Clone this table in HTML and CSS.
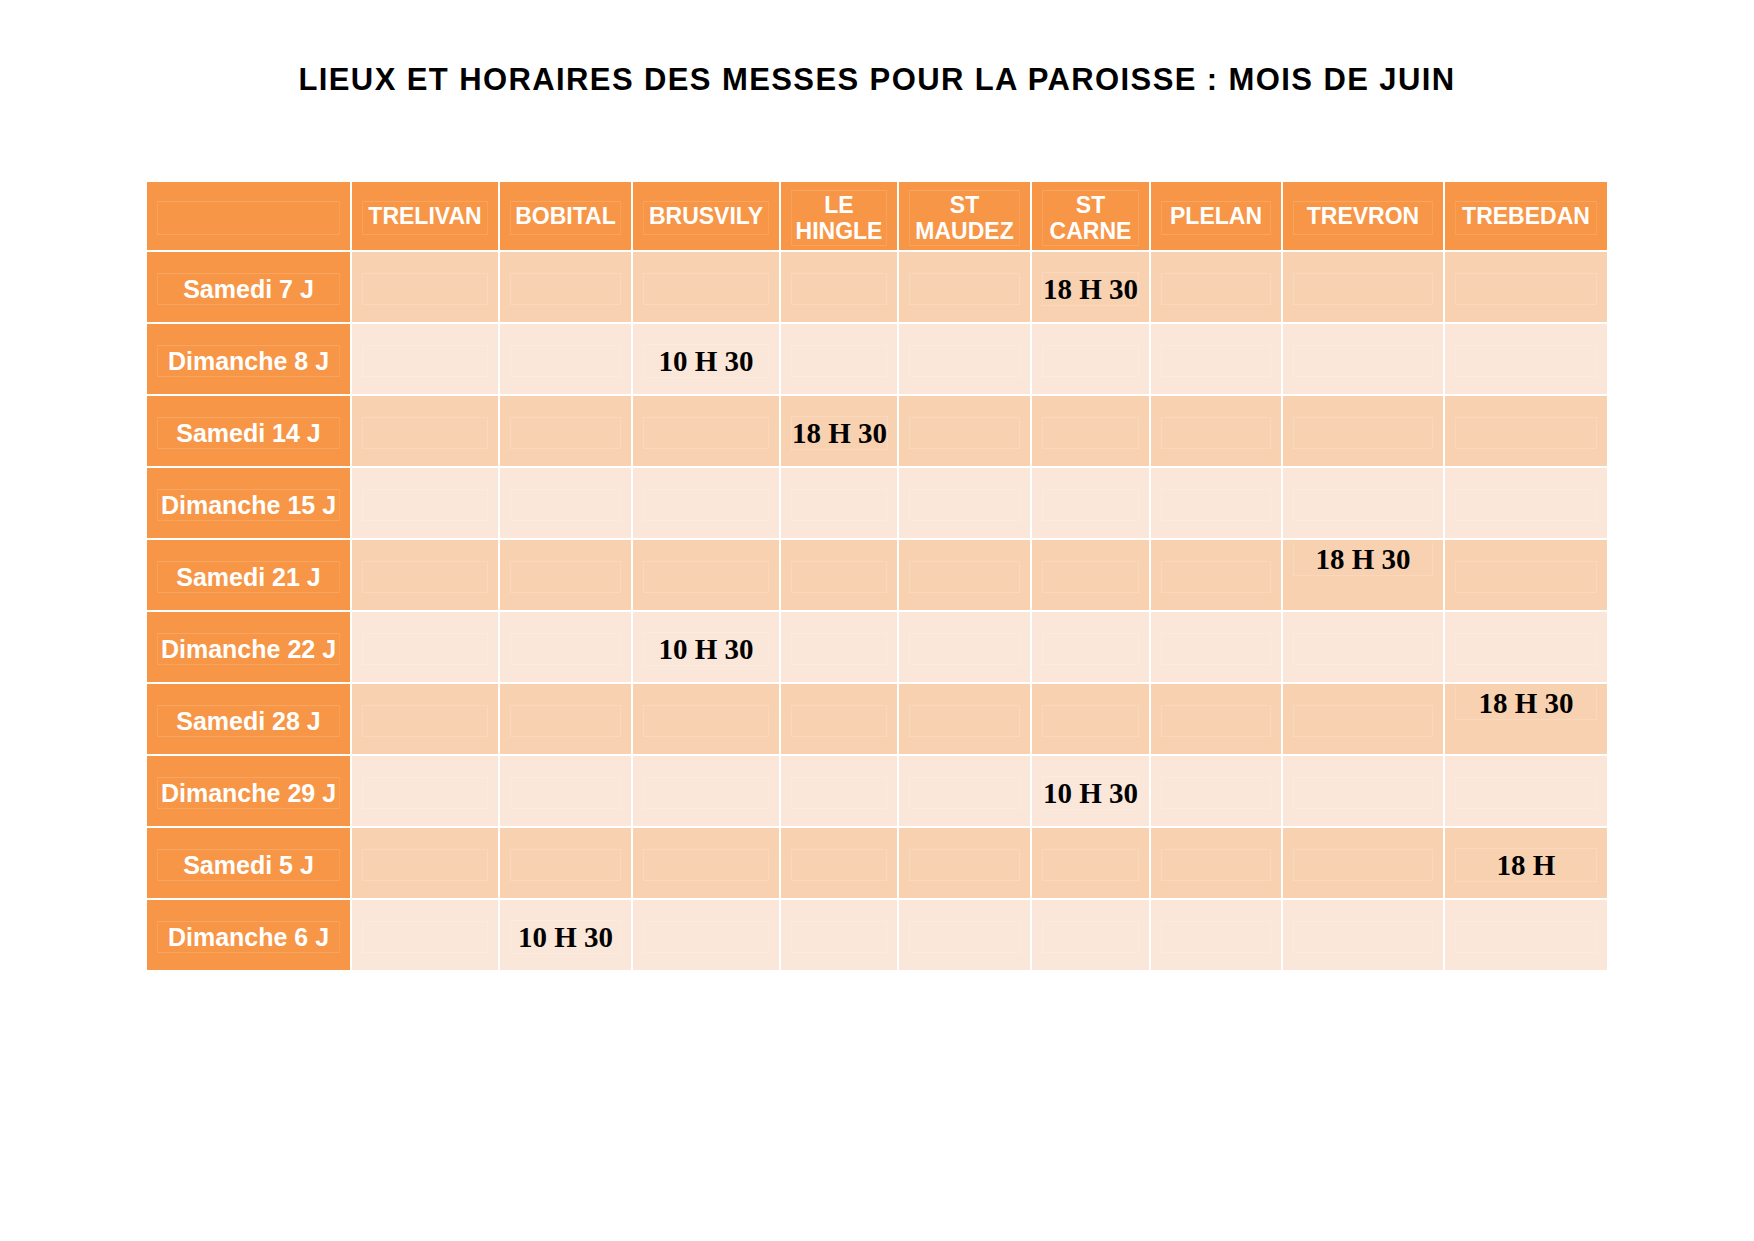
FILE: index.html
```html
<!DOCTYPE html>
<html lang="fr">
<head>
<meta charset="utf-8">
<title>Lieux et horaires des messes</title>
<link rel="stylesheet" href="styles.css">
</head>
<body>
<h1 class="title">LIEUX ET HORAIRES DES MESSES POUR LA PAROISSE : MOIS DE JUIN</h1>
<div class="schedule">
  <div class="cell head"><span class="frame wide">&nbsp;</span></div>
  <div class="cell head"><span class="frame">TRELIVAN</span></div>
  <div class="cell head"><span class="frame">BOBITAL</span></div>
  <div class="cell head"><span class="frame">BRUSVILY</span></div>
  <div class="cell head"><span class="frame">LE<br>HINGLE</span></div>
  <div class="cell head"><span class="frame">ST<br>MAUDEZ</span></div>
  <div class="cell head"><span class="frame">ST<br>CARNE</span></div>
  <div class="cell head"><span class="frame">PLELAN</span></div>
  <div class="cell head"><span class="frame">TREVRON</span></div>
  <div class="cell head"><span class="frame">TREBEDAN</span></div>

  <div class="cell label"><span class="frame">Samedi 7 J</span></div>
  <div class="cell odd"><span class="frame"></span></div>
  <div class="cell odd"><span class="frame"></span></div>
  <div class="cell odd"><span class="frame"></span></div>
  <div class="cell odd"><span class="frame"></span></div>
  <div class="cell odd"><span class="frame"></span></div>
  <div class="cell odd"><span class="frame time">18 H 30</span></div>
  <div class="cell odd"><span class="frame"></span></div>
  <div class="cell odd"><span class="frame"></span></div>
  <div class="cell odd"><span class="frame"></span></div>

  <div class="cell label"><span class="frame">Dimanche 8 J</span></div>
  <div class="cell even"><span class="frame"></span></div>
  <div class="cell even"><span class="frame"></span></div>
  <div class="cell even"><span class="frame time">10 H 30</span></div>
  <div class="cell even"><span class="frame"></span></div>
  <div class="cell even"><span class="frame"></span></div>
  <div class="cell even"><span class="frame"></span></div>
  <div class="cell even"><span class="frame"></span></div>
  <div class="cell even"><span class="frame"></span></div>
  <div class="cell even"><span class="frame"></span></div>

  <div class="cell label"><span class="frame">Samedi 14 J</span></div>
  <div class="cell odd"><span class="frame"></span></div>
  <div class="cell odd"><span class="frame"></span></div>
  <div class="cell odd"><span class="frame"></span></div>
  <div class="cell odd"><span class="frame time">18 H 30</span></div>
  <div class="cell odd"><span class="frame"></span></div>
  <div class="cell odd"><span class="frame"></span></div>
  <div class="cell odd"><span class="frame"></span></div>
  <div class="cell odd"><span class="frame"></span></div>
  <div class="cell odd"><span class="frame"></span></div>

  <div class="cell label"><span class="frame">Dimanche 15 J</span></div>
  <div class="cell even"><span class="frame"></span></div>
  <div class="cell even"><span class="frame"></span></div>
  <div class="cell even"><span class="frame"></span></div>
  <div class="cell even"><span class="frame"></span></div>
  <div class="cell even"><span class="frame"></span></div>
  <div class="cell even"><span class="frame"></span></div>
  <div class="cell even"><span class="frame"></span></div>
  <div class="cell even"><span class="frame"></span></div>
  <div class="cell even"><span class="frame"></span></div>

  <div class="cell label"><span class="frame">Samedi 21 J</span></div>
  <div class="cell odd"><span class="frame"></span></div>
  <div class="cell odd"><span class="frame"></span></div>
  <div class="cell odd"><span class="frame"></span></div>
  <div class="cell odd"><span class="frame"></span></div>
  <div class="cell odd"><span class="frame"></span></div>
  <div class="cell odd"><span class="frame"></span></div>
  <div class="cell odd"><span class="frame"></span></div>
  <div class="cell odd top"><span class="frame time">18 H 30</span></div>
  <div class="cell odd"><span class="frame"></span></div>

  <div class="cell label"><span class="frame">Dimanche 22 J</span></div>
  <div class="cell even"><span class="frame"></span></div>
  <div class="cell even"><span class="frame"></span></div>
  <div class="cell even"><span class="frame time">10 H 30</span></div>
  <div class="cell even"><span class="frame"></span></div>
  <div class="cell even"><span class="frame"></span></div>
  <div class="cell even"><span class="frame"></span></div>
  <div class="cell even"><span class="frame"></span></div>
  <div class="cell even"><span class="frame"></span></div>
  <div class="cell even"><span class="frame"></span></div>

  <div class="cell label"><span class="frame">Samedi 28 J</span></div>
  <div class="cell odd"><span class="frame"></span></div>
  <div class="cell odd"><span class="frame"></span></div>
  <div class="cell odd"><span class="frame"></span></div>
  <div class="cell odd"><span class="frame"></span></div>
  <div class="cell odd"><span class="frame"></span></div>
  <div class="cell odd"><span class="frame"></span></div>
  <div class="cell odd"><span class="frame"></span></div>
  <div class="cell odd"><span class="frame"></span></div>
  <div class="cell odd top"><span class="frame time">18 H 30</span></div>

  <div class="cell label"><span class="frame">Dimanche 29 J</span></div>
  <div class="cell even"><span class="frame"></span></div>
  <div class="cell even"><span class="frame"></span></div>
  <div class="cell even"><span class="frame"></span></div>
  <div class="cell even"><span class="frame"></span></div>
  <div class="cell even"><span class="frame"></span></div>
  <div class="cell even"><span class="frame time">10 H 30</span></div>
  <div class="cell even"><span class="frame"></span></div>
  <div class="cell even"><span class="frame"></span></div>
  <div class="cell even"><span class="frame"></span></div>

  <div class="cell label"><span class="frame">Samedi 5 J</span></div>
  <div class="cell odd"><span class="frame"></span></div>
  <div class="cell odd"><span class="frame"></span></div>
  <div class="cell odd"><span class="frame"></span></div>
  <div class="cell odd"><span class="frame"></span></div>
  <div class="cell odd"><span class="frame"></span></div>
  <div class="cell odd"><span class="frame"></span></div>
  <div class="cell odd"><span class="frame"></span></div>
  <div class="cell odd"><span class="frame"></span></div>
  <div class="cell odd"><span class="frame time">18 H</span></div>

  <div class="cell label"><span class="frame">Dimanche 6 J</span></div>
  <div class="cell even"><span class="frame"></span></div>
  <div class="cell even"><span class="frame time">10 H 30</span></div>
  <div class="cell even"><span class="frame"></span></div>
  <div class="cell even"><span class="frame"></span></div>
  <div class="cell even"><span class="frame"></span></div>
  <div class="cell even"><span class="frame"></span></div>
  <div class="cell even"><span class="frame"></span></div>
  <div class="cell even"><span class="frame"></span></div>
  <div class="cell even"><span class="frame"></span></div>
</div>
</body>
</html>
```

FILE: styles.css
```css
html, body {
  margin: 0;
  padding: 0;
  background: #ffffff;
}

body {
  width: 1754px;
  height: 1241px;
  font-family: "Liberation Sans", Arial, sans-serif;
}

.title {
  margin: 62px 0 0 0;
  font-size: 31px;
  font-weight: bold;
  line-height: 36px;
  letter-spacing: 1.4px;
  text-align: center;
  color: #000000;
}

.schedule {
  width: 1460px;
  margin: 84px auto 0 auto;
  display: grid;
  grid-template-columns: 203px 146px 131px 146px 116px 131px 117px 130px 160px 162px;
  grid-template-rows: 68px repeat(10, 70px);
  gap: 2px;
}

.cell {
  display: flex;
  align-items: center;
  padding: 3px 10px 0 10px;
  min-width: 0;
}

.frame {
  flex: 1;
  display: block;
  min-height: 30px;
  text-align: center;
  white-space: nowrap;
  border: 1px solid rgba(255, 255, 255, 0.14);
  border-left-color: rgba(255, 255, 255, 0.1);
  border-right-color: rgba(255, 255, 255, 0.1);
}

.head {
  background: #f79646;
  color: #ffffff;
  font-size: 23px;
  font-weight: bold;
  line-height: 26px;
  padding-top: 4px;
}

.head .frame {
  padding: 1px 0;
}

.label {
  background: #f79646;
  color: #ffffff;
  font-size: 25px;
  font-weight: bold;
  line-height: 30px;
}

.odd {
  background: #f8d1b1;
}

.even {
  background: #fbe7d9;
}

.odd .frame,
.even .frame {
  border-color: rgba(255, 255, 255, 0.17);
}

.time {
  font-family: "Liberation Serif", "Times New Roman", serif;
  font-size: 29px;
  font-weight: bold;
  line-height: 32px;
  color: #000000;
}

.top {
  align-items: flex-start;
  padding-top: 2px;
}

.top .frame {
  border-top-color: transparent;
}
```
